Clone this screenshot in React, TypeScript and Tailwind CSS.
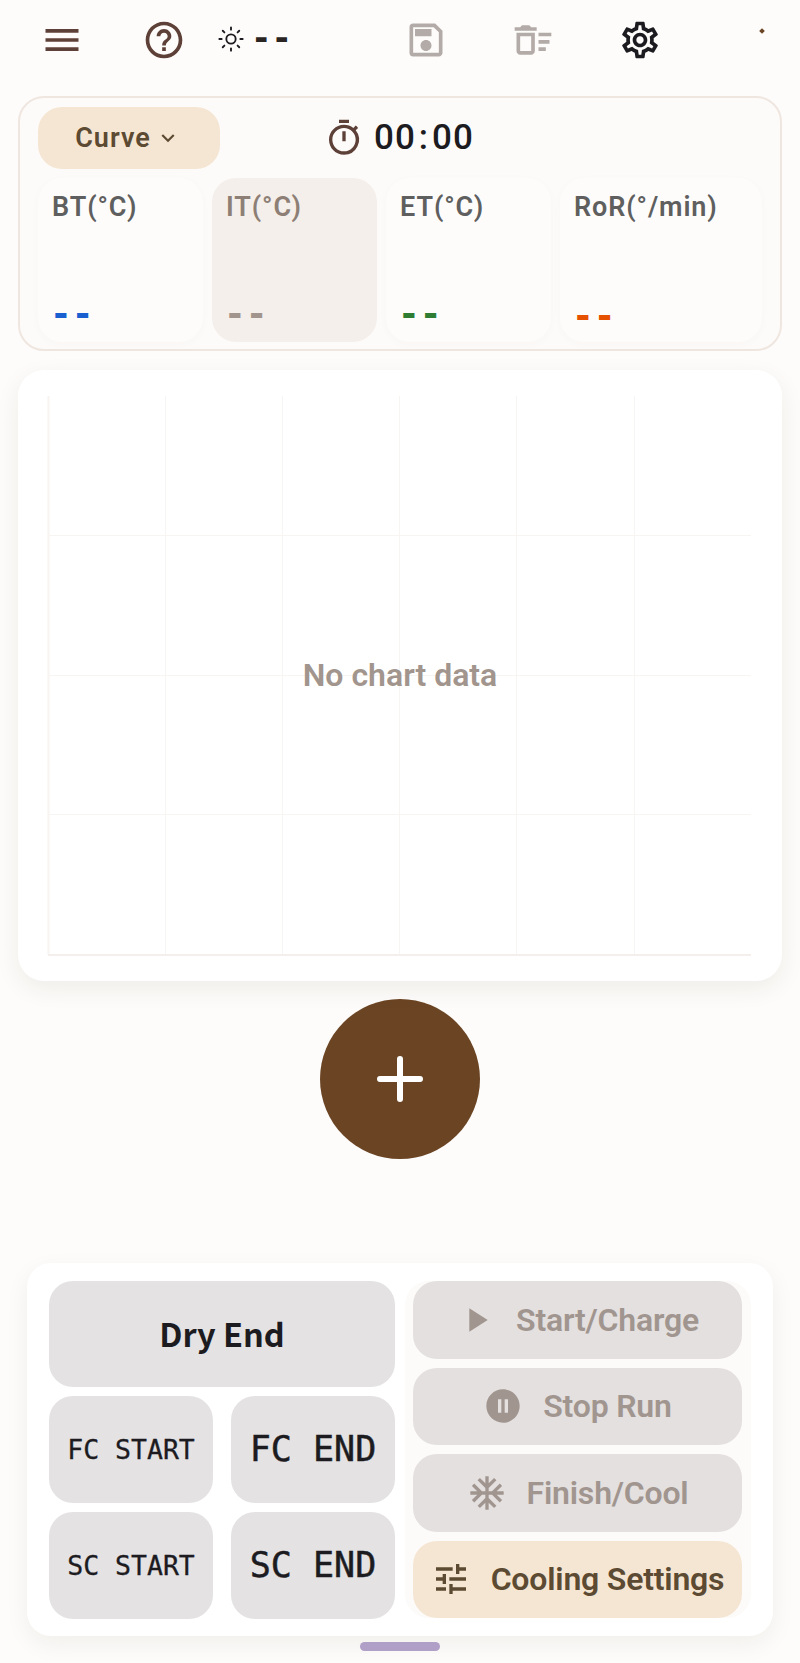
import React from "react";
import { Sun } from "lucide-react";
import {
  MdMenu,
  MdHelpOutline,
  MdOutlineSave,
  MdOutlineDeleteSweep,
  MdOutlineSettings,
  MdOutlineTimer,
  MdKeyboardArrowDown,
  MdPlayArrow,
  MdPauseCircle,
  MdAcUnit,
  MdTune,
} from "react-icons/md";

const roboto = "font-['Roboto',sans-serif]";
const mono = "font-['DejaVu_Sans_Mono',monospace]";

function Stat({ label, color, wide, active }: { label: string; color: string; wide?: boolean; active?: boolean }) {
  return (
    <div
      className={`${wide ? "w-[202px]" : "w-[165px]"} h-[164px] rounded-[24px] flex flex-col justify-between pl-[14px] pt-[13px] pb-[6px] ${
        active ? "bg-[#f4efeb]" : "bg-[#fdfcfa] shadow-[0_2px_10px_rgba(90,60,30,0.025)]"
      }`}
    >
      <span className={`${roboto} text-[27px] leading-[32px] font-semibold tracking-[0.9px] ${active ? "text-[#8d7f75]" : "text-[#5f5f5f]"}`}>{label}</span>
      <span className={`${mono} text-[36px] leading-[44px] font-bold -ml-[2px] ${color} ${wide ? "translate-y-[2px]" : ""}`}>--</span>
    </div>
  );
}

function Chart() {
  const vs = [48, 165, 282, 399, 516, 634];
  const hs = [535, 675, 814];
  return (
    <svg className="absolute left-0 top-0" width="764" height="611" viewBox="18 370 764 611" fill="none">
      {vs.map((x) => (
        <line key={x} x1={x + 0.5} x2={x + 0.5} y1="396" y2="955" stroke="#f7f4f2" strokeWidth={x === 48 ? 2 : 1} />
      ))}
      {hs.map((y) => (
        <line key={y} x1="48" x2="751" y1={y + 0.5} y2={y + 0.5} stroke="#f7f4f2" strokeWidth="1" />
      ))}
      <line x1="48" x2="751" y1="955" y2="955" stroke="#f4eeec" strokeWidth="2" />
    </svg>
  );
}

function ActionBtn({ icon, label, active }: { icon: React.ReactNode; label: string; active?: boolean }) {
  return (
    <button
      className={`flex-1 rounded-[24px] flex items-center justify-center gap-[20px] ${roboto} text-[32px] font-semibold tracking-[-0.2px] ${
        active ? "bg-[#f5e6d3] text-[#5c4a32]" : "bg-[#e3e0df] text-[#a1958f]"
      }`}
    >
      {icon}
      <span>{label}</span>
    </button>
  );
}

function EventBtn({ label, big }: { label: string; big?: boolean }) {
  return (
    <button
      className={`h-[107px] rounded-[24px] bg-[#e4e2e3] text-[#1c1b1f] whitespace-pre flex items-center justify-center ${mono} ${
        big ? "text-[35px] [-webkit-text-stroke:0.5px_#1c1b1f]" : "text-[26.5px] [-webkit-text-stroke:0.3px_#1c1b1f]"
      }`}
    >
      {label}
    </button>
  );
}

export default function App() {
  return (
    <div className={`w-[800px] h-[1663px] bg-[#fdfcfa] flex flex-col ${roboto} overflow-hidden`}>
      <header className="relative h-[96px] flex items-start pt-[18px] pl-[40px] text-[#5d4037]">
        <MdMenu size={44} />
        <MdHelpOutline size={44} className="ml-[58px]" />
        <Sun size={28} strokeWidth={1.6} className="ml-[31px] mt-[7px] text-[#1c1b1f]" />
        <span className={`${mono} ml-[6px] mt-[-3px] text-[34px] leading-[44px] font-bold text-[#2a2522]`}>--</span>
        <MdOutlineSave size={44} className="ml-[112px] text-[#b3aba7]" />
        <MdOutlineDeleteSweep size={44} className="ml-[63px] text-[#b3aba7]" />
        <MdOutlineSettings size={44} className="ml-[63px] text-[#1c1b1f]" />
        <span className="absolute left-[760px] top-[29px] w-[4px] h-[4px] rotate-45 bg-[#6b4423]" />
      </header>

      <section className="mx-[18px] w-[764px] h-[255px] rounded-[26px] border-2 border-[#efe6e0] bg-[#fdfbf9] pl-[18px] pt-[9px]">
        <div className="flex items-center h-[62px]">
          <button className="w-[182px] h-[62px] rounded-[24px] bg-[#f5e6d3] flex items-center justify-center gap-[4px] pr-[2px] text-[#5c4a32] text-[27px] font-semibold tracking-[1px]">
            Curve
            <MdKeyboardArrowDown size={26} />
          </button>
          <MdOutlineTimer size={40} className="ml-[104px] text-[#5d4037]" />
          <span className="ml-[10px] text-[35px] leading-[40px] font-medium tracking-[1px] text-[#1c1b1f]">
            00<span className="mx-[3px]">:</span>00
          </span>
        </div>
        <div className="flex gap-[9px] mt-[9px]">
          <Stat label="BT(°C)" color="text-[#1a5fd0]" />
          <Stat label="IT(°C)" color="text-[#a1958d]" active />
          <Stat label="ET(°C)" color="text-[#2e7d32]" />
          <Stat label="RoR(°/min)" color="text-[#e65100]" wide />
        </div>
      </section>

      <section className="relative mx-[18px] mt-[19px] w-[764px] h-[611px] rounded-[26px] bg-white shadow-[0_8px_24px_rgba(60,40,20,0.07)] flex items-center justify-center">
        <Chart />
        <span className="relative text-[32px] font-semibold text-[#a1958d] -translate-y-[1px]">No chart data</span>
      </section>

      <button className="mt-[18px] mx-auto w-[160px] h-[160px] shrink-0 rounded-full bg-[#6b4423] flex items-center justify-center">
        <svg width="50" height="50" viewBox="0 0 50 50" fill="none" stroke="#fff" strokeWidth="6" strokeLinecap="round">
          <path d="M25 5v40M5 25h40" />
        </svg>
      </button>

      <section className="mt-[104px] mx-[27px] w-[746px] h-[373px] rounded-[24px] bg-white shadow-[0_8px_24px_rgba(60,40,20,0.06)] flex pt-[18px] pl-[22px]">
        <div className="w-[346px] flex flex-col gap-[9px]">
          <button className="h-[106px] pb-[2px] rounded-[24px] bg-[#e4e2e3] text-[#1c1b1f] font-['Noto_Sans_CJK_SC',sans-serif] font-bold text-[32.5px]">Dry End</button>
          <div className="grid grid-cols-2 gap-x-[18px] gap-y-[9px]">
            <EventBtn label="FC START" />
            <EventBtn label="FC END" big />
            <EventBtn label="SC START" />
            <EventBtn label="SC END" big />
          </div>
        </div>
        <div className="ml-[10px] w-[346px] h-[337px] rounded-[24px] bg-[#fdfbf9] pl-[8px] pr-[9px] flex flex-col gap-[9px]">
          <ActionBtn icon={<MdPlayArrow size={40} />} label="Start/Charge" />
          <ActionBtn icon={<MdPauseCircle size={40} />} label="Stop Run" />
          <ActionBtn icon={<MdAcUnit size={40} />} label="Finish/Cool" />
          <ActionBtn icon={<MdTune size={40} />} label="Cooling Settings" active />
        </div>
      </section>

      <div className="mt-[6px] mx-auto w-[80px] h-[9px] rounded-full bg-[#b0a0c8]" />
    </div>
  );
}
